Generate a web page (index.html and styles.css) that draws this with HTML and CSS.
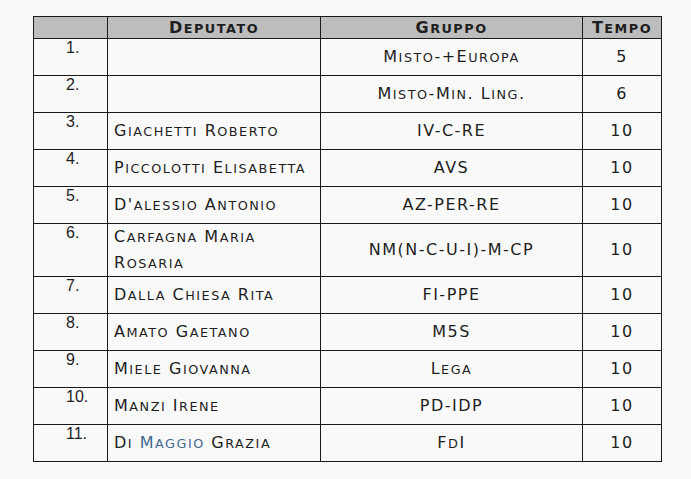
FILE: index.html
```html
<!DOCTYPE html>
<html lang="it">
<head>
<meta charset="utf-8">
<title>Tempi</title>
<link rel="stylesheet" href="styles.css">
</head>
<body>
<table class="tempi">
  <colgroup>
    <col class="c-num">
    <col class="c-name">
    <col class="c-group">
    <col class="c-time">
  </colgroup>
  <thead>
    <tr>
      <th></th>
      <th>D<span class="sc">eputato</span></th>
      <th>G<span class="sc">ruppo</span></th>
      <th>T<span class="sc">empo</span></th>
    </tr>
  </thead>
  <tbody>
    <tr><td class="num">1.</td><td class="name"></td><td class="group">M<span class="sc">isto</span>-+E<span class="sc">uropa</span></td><td class="time">5</td></tr>
    <tr><td class="num">2.</td><td class="name"></td><td class="group">M<span class="sc">isto</span>-M<span class="sc">in</span>. L<span class="sc">ing</span>.</td><td class="time">6</td></tr>
    <tr><td class="num">3.</td><td class="name">G<span class="sc">iachetti</span> R<span class="sc">oberto</span></td><td class="group">IV-C-RE</td><td class="time">10</td></tr>
    <tr><td class="num">4.</td><td class="name">P<span class="sc">iccolotti</span> E<span class="sc">lisabetta</span></td><td class="group">AVS</td><td class="time">10</td></tr>
    <tr><td class="num">5.</td><td class="name">D'<span class="sc">alessio</span> A<span class="sc">ntonio</span></td><td class="group">AZ-PER-RE</td><td class="time">10</td></tr>
    <tr><td class="num">6.</td><td class="name">C<span class="sc">arfagna</span> M<span class="sc">aria</span> R<span class="sc">osaria</span></td><td class="group">NM(N-C-U-I)-M-CP</td><td class="time">10</td></tr>
    <tr><td class="num">7.</td><td class="name">D<span class="sc">alla</span> C<span class="sc">hiesa</span> R<span class="sc">ita</span></td><td class="group">FI-PPE</td><td class="time">10</td></tr>
    <tr><td class="num">8.</td><td class="name">A<span class="sc">mato</span> G<span class="sc">aetano</span></td><td class="group">M5S</td><td class="time">10</td></tr>
    <tr><td class="num">9.</td><td class="name">M<span class="sc">iele</span> G<span class="sc">iovanna</span></td><td class="group">L<span class="sc">ega</span></td><td class="time">10</td></tr>
    <tr><td class="num">10.</td><td class="name">M<span class="sc">anzi</span> I<span class="sc">rene</span></td><td class="group">PD-IDP</td><td class="time">10</td></tr>
    <tr><td class="num">11.</td><td class="name">D<span class="sc">i</span> <span class="link">M<span class="sc">aggio</span></span> G<span class="sc">razia</span></td><td class="group">F<span class="sc">d</span>I</td><td class="time">10</td></tr>
  </tbody>
</table>
</body>
</html>
```
FILE: styles.css
```css
html, body {
  margin: 0;
  background: #f9f9f9;
}
body {
  padding: 16px 0 0 33px;
  font-family: "DejaVu Sans", Verdana, sans-serif;
  color: #1e1e1e;
}
.tempi {
  border-collapse: collapse;
  table-layout: fixed;
  width: 628px;
  font-size: 16px;
  text-transform: uppercase;
  letter-spacing: 1.5px;
}
.c-num { width: 74px; }
.c-name { width: 213px; }
.c-group { width: 262px; }
.c-time { width: 79px; }
.tempi th, .tempi td {
  border: 1px solid #1a1a1a;
  padding: 0;
}
.tempi th {
  background: #bdbdbd;
  height: 21px;
  font-weight: bold;
  line-height: 20px;
  text-align: center;
  vertical-align: middle;
}
.sc {
  font-size: 0.8em;
  line-height: 0;
}
.tempi td {
  height: 35px;
  line-height: 26px;
  vertical-align: middle;
}
.tempi td.num {
  font-family: "Liberation Sans", Arial, sans-serif;
  font-size: 16px;
  letter-spacing: 0;
  line-height: 16px;
  text-align: left;
  vertical-align: top;
  padding: 1px 0 0 32px;
}
.tempi td.name {
  padding: 0 0 0 6px;
}
.tempi td.group, .tempi td.time {
  text-align: center;
}
.link {
  color: #44688f;
}
```
